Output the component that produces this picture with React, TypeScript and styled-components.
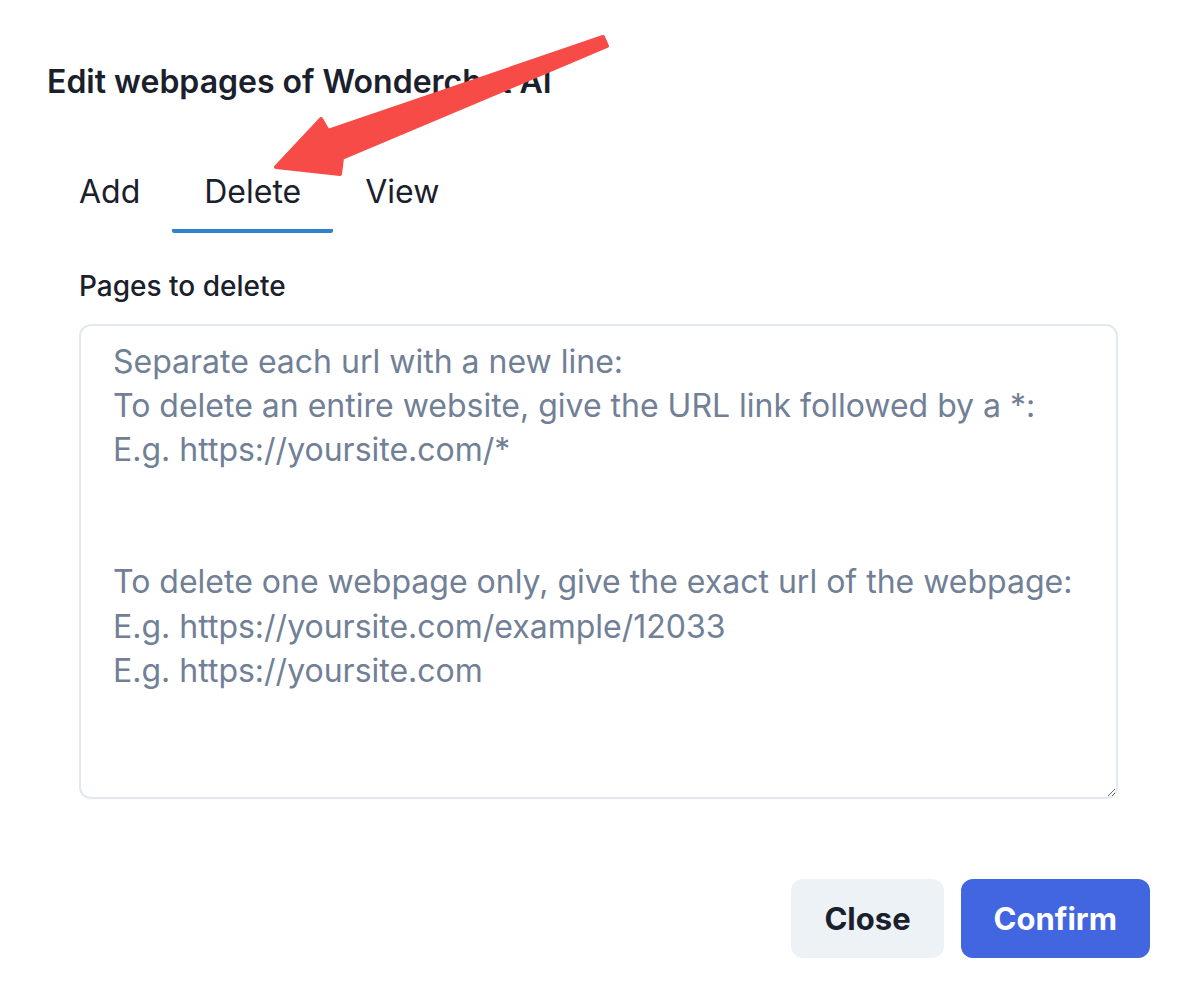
import React, { useState } from 'react';
import styled, { createGlobalStyle } from 'styled-components';

const GlobalStyle = createGlobalStyle`
    html, body {
        margin: 0;
        padding: 0;
        background: #ffffff;
        font-family: Inter, "Noto Sans", sans-serif;
        color: #1a202c;
    }
`;

const Modal = styled.div`
    position: relative;
    width: 1192px;
    height: 988px;
    box-sizing: border-box;
    padding: 0 42px 0 47px;
    display: flex;
    flex-direction: column;
    background: #ffffff;
`;

const Title = styled.h2`
    margin: 0;
    padding-top: 62px;
    font-size: 32px;
    line-height: 40px;
    font-weight: 600;
    color: #1a202c;
`;

const TabList = styled.div`
    display: flex;
    margin-top: 60px;
`;

const Tab = styled.button<{ $active?: boolean }>`
    appearance: none;
    background: none;
    border: none;
    border-bottom: 4px solid ${(p) => (p.$active ? '#3182ce' : 'transparent')};
    border-radius: 2px;
    padding: 12px 32px 19px;
    margin: 0;
    font-family: inherit;
    font-size: 32px;
    line-height: 36px;
    font-weight: 400;
    color: #1a202c;
    cursor: pointer;
`;

const Panel = styled.div`
    padding: 0 32px;
    display: flex;
    flex-direction: column;
`;

const Label = styled.label`
    margin-top: 37px;
    font-size: 28px;
    line-height: 32px;
    font-weight: 500;
    color: #1a202c;
`;

const TextArea = styled.textarea`
    margin-top: 22px;
    height: 475px;
    box-sizing: border-box;
    width: 100%;
    padding: 14px 32px;
    border: 2px solid #e2e8f0;
    border-radius: 12px;
    font-family: inherit;
    font-size: 32px;
    line-height: 44.1px;
    color: #1a202c;
    resize: vertical;
    outline: none;

    &::placeholder {
        color: #718096;
    }
`;

const Footer = styled.div`
    display: flex;
    justify-content: flex-end;
    gap: 17px;
    margin-top: 80px;
`;

const Button = styled.button<{ $primary?: boolean }>`
    appearance: none;
    border: none;
    height: 79px;
    padding: 0 33px;
    border-radius: 12px;
    font-family: inherit;
    font-size: 31px;
    font-weight: 700;
    background: ${(p) => (p.$primary ? '#4166df' : '#edf2f7')};
    color: ${(p) => (p.$primary ? '#ffffff' : '#1a202c')};
    cursor: pointer;
`;

const Arrow = styled.svg`
    position: absolute;
    left: 0;
    top: 0;
    pointer-events: none;
`;

const placeholder = [
    'Separate each url with a new line:',
    'To delete an entire website, give the URL link followed by a *:',
    'E.g. https://yoursite.com/*',
    '',
    '',
    'To delete one webpage only, give the exact url of the webpage:',
    'E.g. https://yoursite.com/example/12033',
    'E.g. https://yoursite.com',
].join('\n');

const App: React.FC = () => {
    const [tab, setTab] = useState<number>(1);
    const tabs = ['Add', 'Delete', 'View'];

    return (
        <Modal>
            <GlobalStyle />
            <Title>Edit webpages of Wonderchat AI</Title>
            <TabList>
                {tabs.map((t, i) => (
                    <Tab key={t} $active={tab === i} onClick={() => setTab(i)}>{t}</Tab>
                ))}
            </TabList>
            <Panel>
                <Label>Pages to delete</Label>
                <TextArea placeholder={placeholder} />
            </Panel>
            <Footer>
                <Button>Close</Button>
                <Button $primary>Confirm</Button>
            </Footer>
            <Arrow width="1192" height="988" viewBox="0 0 1192 988">
                <polygon
                    points="603,37 328,131 321,119 276,167 340,174 342,158 607,46"
                    fill="#f74b47"
                    stroke="#f74b47"
                    strokeWidth="4"
                    strokeLinejoin="round"
                />
            </Arrow>
        </Modal>
    );
};

export default App;
